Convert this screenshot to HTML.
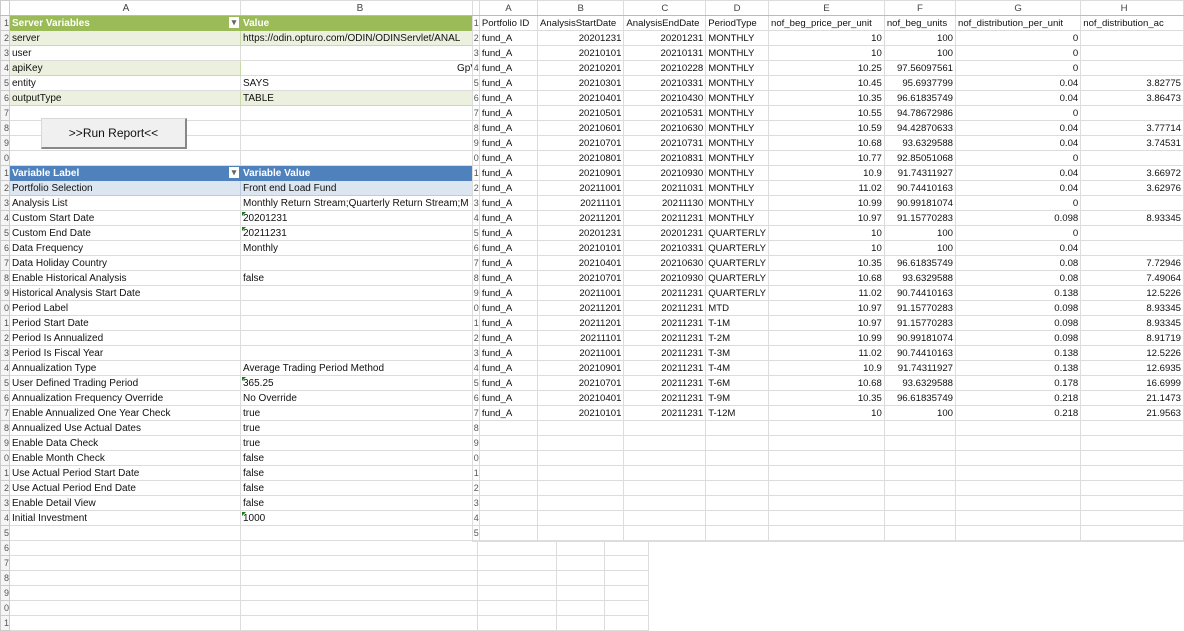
<!DOCTYPE html>
<html><head><meta charset="utf-8"><style>
body{margin:0;width:1184px;height:623px;overflow:hidden;background:#fff;position:relative;font-family:"Liberation Sans",sans-serif;}
table{border-collapse:collapse;table-layout:fixed;position:absolute;}
td{height:13px;line-height:13px;padding:1px 0 0 2px;border:1px solid #dcdcdc;white-space:nowrap;overflow:hidden;color:#111;}
#L{left:0;top:0;font-size:10px;}
#L td.n{color:#555;font-size:9px;text-align:right;padding:1px 0 0 0;border-color:#ccc;background:#f5f5f5;text-indent:-3px}
#L tr.h td{text-align:center;color:#444;background:#fff;border-bottom-color:#bbb;}
.g{background:#9bbb59;color:#fff!important;font-weight:bold;border-color:#9bbb59!important}
.gb{background:#ebf1de;border-color:#c9d9a8!important}
.b{background:#4f81bd;color:#fff!important;font-weight:bold;border-color:#4f81bd!important}
.bb{background:#dce6f1;border-color:#b8cce4!important}
.dd{position:relative}
.dd:after{content:"▾";position:absolute;right:1px;top:1px;width:10px;height:11px;background:#fff;color:#666;font-size:9px;line-height:11px;text-align:center;}
.tri{position:relative}
.tri:before{content:"";position:absolute;left:1px;top:1px;border-top:4px solid #1a7a1a;border-right:4px solid transparent;}
#btn{position:absolute;left:41px;top:118px;width:143px;height:28px;background:#f0f0f0;border:1px solid #d8d8d8;border-right:2px solid #888;border-bottom:2px solid #888;font-size:12px;text-align:center;line-height:28px;color:#111}
#Rw{position:absolute;left:472px;top:0;width:712px;height:541px;background:#fff;overflow:hidden;border-bottom:1px solid #ddd}
#R{left:0;top:0;font-size:9.6px;}
#R td{padding:1px 2px 0 2px;}
#R td.n{color:#555;font-size:9px;text-align:right;padding:1px 0 0 0;text-indent:-3px}
#R tr.h td{text-align:center;color:#444;border-bottom-color:#bbb}
#R td.r{text-align:right}
</style></head><body>
<table id="L">
<colgroup><col style="width:9px"><col style="width:231px"><col style="width:237px"><col style="width:79px"><col style="width:48px"><col style="width:44px"></colgroup>
<tr class="h"><td class="n"></td><td>A</td><td>B</td><td></td><td></td><td></td></tr>
<tr><td class="n">1</td><td class="g dd">Server Variables</td><td class="g">Value</td><td></td><td></td><td></td></tr>
<tr><td class="n">2</td><td class="gb">server</td><td class="gb">https://odin.opturo.com/ODIN/ODINServlet/ANAL</td><td></td><td></td><td></td></tr>
<tr><td class="n">3</td><td>user</td><td></td><td></td><td></td><td></td></tr>
<tr><td class="n">4</td><td class="gb">apiKey</td><td style="text-align:right">GpV</td><td></td><td></td><td></td></tr>
<tr><td class="n">5</td><td>entity</td><td>SAYS</td><td></td><td></td><td></td></tr>
<tr><td class="n">6</td><td class="gb">outputType</td><td class="gb">TABLE</td><td></td><td></td><td></td></tr>
<tr><td class="n">7</td><td></td><td></td><td></td><td></td><td></td></tr>
<tr><td class="n">8</td><td></td><td></td><td></td><td></td><td></td></tr>
<tr><td class="n">9</td><td></td><td></td><td></td><td></td><td></td></tr>
<tr><td class="n">0</td><td></td><td></td><td></td><td></td><td></td></tr>
<tr><td class="n">1</td><td class="b dd">Variable Label</td><td class="b">Variable Value</td><td></td><td></td><td></td></tr>
<tr><td class="n">2</td><td class="bb">Portfolio Selection</td><td class="bb">Front end Load Fund</td><td></td><td></td><td></td></tr>
<tr><td class="n">3</td><td>Analysis List</td><td>Monthly Return Stream;Quarterly Return Stream;M</td><td></td><td></td><td></td></tr>
<tr><td class="n">4</td><td>Custom Start Date</td><td class="tri">20201231</td><td></td><td></td><td></td></tr>
<tr><td class="n">5</td><td>Custom End Date</td><td class="tri">20211231</td><td></td><td></td><td></td></tr>
<tr><td class="n">6</td><td>Data Frequency</td><td>Monthly</td><td></td><td></td><td></td></tr>
<tr><td class="n">7</td><td>Data Holiday Country</td><td></td><td></td><td></td><td></td></tr>
<tr><td class="n">8</td><td>Enable Historical Analysis</td><td>false</td><td></td><td></td><td></td></tr>
<tr><td class="n">9</td><td>Historical Analysis Start Date</td><td></td><td></td><td></td><td></td></tr>
<tr><td class="n">0</td><td>Period Label</td><td></td><td></td><td></td><td></td></tr>
<tr><td class="n">1</td><td>Period Start Date</td><td></td><td></td><td></td><td></td></tr>
<tr><td class="n">2</td><td>Period Is Annualized</td><td></td><td></td><td></td><td></td></tr>
<tr><td class="n">3</td><td>Period Is Fiscal Year</td><td></td><td></td><td></td><td></td></tr>
<tr><td class="n">4</td><td>Annualization Type</td><td>Average Trading Period Method</td><td></td><td></td><td></td></tr>
<tr><td class="n">5</td><td>User Defined Trading Period</td><td class="tri">365.25</td><td></td><td></td><td></td></tr>
<tr><td class="n">6</td><td>Annualization Frequency Override</td><td>No Override</td><td></td><td></td><td></td></tr>
<tr><td class="n">7</td><td>Enable Annualized One Year Check</td><td>true</td><td></td><td></td><td></td></tr>
<tr><td class="n">8</td><td>Annualized Use Actual Dates</td><td>true</td><td></td><td></td><td></td></tr>
<tr><td class="n">9</td><td>Enable Data Check</td><td>true</td><td></td><td></td><td></td></tr>
<tr><td class="n">0</td><td>Enable Month Check</td><td>false</td><td></td><td></td><td></td></tr>
<tr><td class="n">1</td><td>Use Actual Period Start Date</td><td>false</td><td></td><td></td><td></td></tr>
<tr><td class="n">2</td><td>Use Actual Period End Date</td><td>false</td><td></td><td></td><td></td></tr>
<tr><td class="n">3</td><td>Enable Detail View</td><td>false</td><td></td><td></td><td></td></tr>
<tr><td class="n">4</td><td>Initial Investment</td><td class="tri">1000</td><td></td><td></td><td></td></tr>
<tr><td class="n">5</td><td></td><td></td><td></td><td></td><td></td></tr>
<tr><td class="n">6</td><td></td><td></td><td></td><td></td><td></td></tr>
<tr><td class="n">7</td><td></td><td></td><td></td><td></td><td></td></tr>
<tr><td class="n">8</td><td></td><td></td><td></td><td></td><td></td></tr>
<tr><td class="n">9</td><td></td><td></td><td></td><td></td><td></td></tr>
<tr><td class="n">0</td><td></td><td></td><td></td><td></td><td></td></tr>
<tr><td class="n">1</td><td></td><td></td><td></td><td></td><td></td></tr>
</table>
<div id="btn">&gt;&gt;Run Report&lt;&lt;</div>
<div id="Rw"><table id="R">
<colgroup><col style="width:8px"><col style="width:60px"><col style="width:88px"><col style="width:83px"><col style="width:59px"><col style="width:119px"><col style="width:73px"><col style="width:130px"><col style="width:108px"></colgroup>
<tr class="h"><td class="n"></td><td>A</td><td>B</td><td>C</td><td>D</td><td>E</td><td>F</td><td>G</td><td style="text-indent:-16px">H</td></tr>
<tr><td class="n">1</td><td>Portfolio ID</td><td>AnalysisStartDate</td><td>AnalysisEndDate</td><td>PeriodType</td><td>nof_beg_price_per_unit</td><td>nof_beg_units</td><td>nof_distribution_per_unit</td><td>nof_distribution_ac</td></tr>
<tr><td class="n">2</td><td>fund_A</td><td class="r">20201231</td><td class="r">20201231</td><td>MONTHLY</td><td class="r">10</td><td class="r">100</td><td class="r">0</td><td class="r"></td></tr>
<tr><td class="n">3</td><td>fund_A</td><td class="r">20210101</td><td class="r">20210131</td><td>MONTHLY</td><td class="r">10</td><td class="r">100</td><td class="r">0</td><td class="r"></td></tr>
<tr><td class="n">4</td><td>fund_A</td><td class="r">20210201</td><td class="r">20210228</td><td>MONTHLY</td><td class="r">10.25</td><td class="r">97.56097561</td><td class="r">0</td><td class="r"></td></tr>
<tr><td class="n">5</td><td>fund_A</td><td class="r">20210301</td><td class="r">20210331</td><td>MONTHLY</td><td class="r">10.45</td><td class="r">95.6937799</td><td class="r">0.04</td><td class="r">3.82775</td></tr>
<tr><td class="n">6</td><td>fund_A</td><td class="r">20210401</td><td class="r">20210430</td><td>MONTHLY</td><td class="r">10.35</td><td class="r">96.61835749</td><td class="r">0.04</td><td class="r">3.86473</td></tr>
<tr><td class="n">7</td><td>fund_A</td><td class="r">20210501</td><td class="r">20210531</td><td>MONTHLY</td><td class="r">10.55</td><td class="r">94.78672986</td><td class="r">0</td><td class="r"></td></tr>
<tr><td class="n">8</td><td>fund_A</td><td class="r">20210601</td><td class="r">20210630</td><td>MONTHLY</td><td class="r">10.59</td><td class="r">94.42870633</td><td class="r">0.04</td><td class="r">3.77714</td></tr>
<tr><td class="n">9</td><td>fund_A</td><td class="r">20210701</td><td class="r">20210731</td><td>MONTHLY</td><td class="r">10.68</td><td class="r">93.6329588</td><td class="r">0.04</td><td class="r">3.74531</td></tr>
<tr><td class="n">0</td><td>fund_A</td><td class="r">20210801</td><td class="r">20210831</td><td>MONTHLY</td><td class="r">10.77</td><td class="r">92.85051068</td><td class="r">0</td><td class="r"></td></tr>
<tr><td class="n">1</td><td>fund_A</td><td class="r">20210901</td><td class="r">20210930</td><td>MONTHLY</td><td class="r">10.9</td><td class="r">91.74311927</td><td class="r">0.04</td><td class="r">3.66972</td></tr>
<tr><td class="n">2</td><td>fund_A</td><td class="r">20211001</td><td class="r">20211031</td><td>MONTHLY</td><td class="r">11.02</td><td class="r">90.74410163</td><td class="r">0.04</td><td class="r">3.62976</td></tr>
<tr><td class="n">3</td><td>fund_A</td><td class="r">20211101</td><td class="r">20211130</td><td>MONTHLY</td><td class="r">10.99</td><td class="r">90.99181074</td><td class="r">0</td><td class="r"></td></tr>
<tr><td class="n">4</td><td>fund_A</td><td class="r">20211201</td><td class="r">20211231</td><td>MONTHLY</td><td class="r">10.97</td><td class="r">91.15770283</td><td class="r">0.098</td><td class="r">8.93345</td></tr>
<tr><td class="n">5</td><td>fund_A</td><td class="r">20201231</td><td class="r">20201231</td><td>QUARTERLY</td><td class="r">10</td><td class="r">100</td><td class="r">0</td><td class="r"></td></tr>
<tr><td class="n">6</td><td>fund_A</td><td class="r">20210101</td><td class="r">20210331</td><td>QUARTERLY</td><td class="r">10</td><td class="r">100</td><td class="r">0.04</td><td class="r"></td></tr>
<tr><td class="n">7</td><td>fund_A</td><td class="r">20210401</td><td class="r">20210630</td><td>QUARTERLY</td><td class="r">10.35</td><td class="r">96.61835749</td><td class="r">0.08</td><td class="r">7.72946</td></tr>
<tr><td class="n">8</td><td>fund_A</td><td class="r">20210701</td><td class="r">20210930</td><td>QUARTERLY</td><td class="r">10.68</td><td class="r">93.6329588</td><td class="r">0.08</td><td class="r">7.49064</td></tr>
<tr><td class="n">9</td><td>fund_A</td><td class="r">20211001</td><td class="r">20211231</td><td>QUARTERLY</td><td class="r">11.02</td><td class="r">90.74410163</td><td class="r">0.138</td><td class="r">12.5226</td></tr>
<tr><td class="n">0</td><td>fund_A</td><td class="r">20211201</td><td class="r">20211231</td><td>MTD</td><td class="r">10.97</td><td class="r">91.15770283</td><td class="r">0.098</td><td class="r">8.93345</td></tr>
<tr><td class="n">1</td><td>fund_A</td><td class="r">20211201</td><td class="r">20211231</td><td>T-1M</td><td class="r">10.97</td><td class="r">91.15770283</td><td class="r">0.098</td><td class="r">8.93345</td></tr>
<tr><td class="n">2</td><td>fund_A</td><td class="r">20211101</td><td class="r">20211231</td><td>T-2M</td><td class="r">10.99</td><td class="r">90.99181074</td><td class="r">0.098</td><td class="r">8.91719</td></tr>
<tr><td class="n">3</td><td>fund_A</td><td class="r">20211001</td><td class="r">20211231</td><td>T-3M</td><td class="r">11.02</td><td class="r">90.74410163</td><td class="r">0.138</td><td class="r">12.5226</td></tr>
<tr><td class="n">4</td><td>fund_A</td><td class="r">20210901</td><td class="r">20211231</td><td>T-4M</td><td class="r">10.9</td><td class="r">91.74311927</td><td class="r">0.138</td><td class="r">12.6935</td></tr>
<tr><td class="n">5</td><td>fund_A</td><td class="r">20210701</td><td class="r">20211231</td><td>T-6M</td><td class="r">10.68</td><td class="r">93.6329588</td><td class="r">0.178</td><td class="r">16.6999</td></tr>
<tr><td class="n">6</td><td>fund_A</td><td class="r">20210401</td><td class="r">20211231</td><td>T-9M</td><td class="r">10.35</td><td class="r">96.61835749</td><td class="r">0.218</td><td class="r">21.1473</td></tr>
<tr><td class="n">7</td><td>fund_A</td><td class="r">20210101</td><td class="r">20211231</td><td>T-12M</td><td class="r">10</td><td class="r">100</td><td class="r">0.218</td><td class="r">21.9563</td></tr>
<tr><td class="n">8</td><td></td><td></td><td></td><td></td><td></td><td></td><td></td><td></td></tr>
<tr><td class="n">9</td><td></td><td></td><td></td><td></td><td></td><td></td><td></td><td></td></tr>
<tr><td class="n">0</td><td></td><td></td><td></td><td></td><td></td><td></td><td></td><td></td></tr>
<tr><td class="n">1</td><td></td><td></td><td></td><td></td><td></td><td></td><td></td><td></td></tr>
<tr><td class="n">2</td><td></td><td></td><td></td><td></td><td></td><td></td><td></td><td></td></tr>
<tr><td class="n">3</td><td></td><td></td><td></td><td></td><td></td><td></td><td></td><td></td></tr>
<tr><td class="n">4</td><td></td><td></td><td></td><td></td><td></td><td></td><td></td><td></td></tr>
<tr><td class="n">5</td><td></td><td></td><td></td><td></td><td></td><td></td><td></td><td></td></tr>
</table></div>
</body></html>
